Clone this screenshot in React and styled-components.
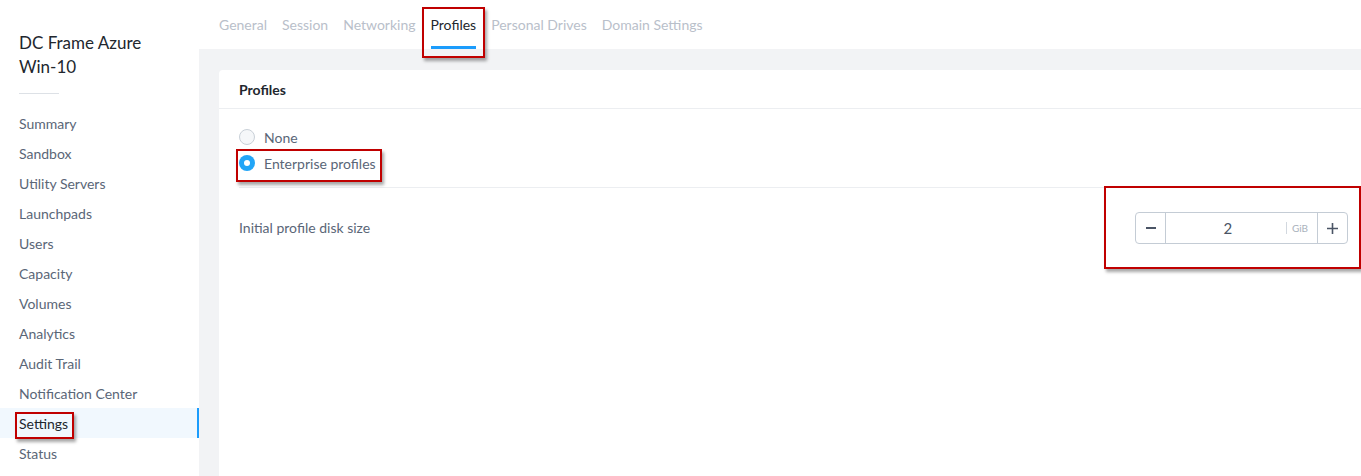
import React from "react";
import styled, { createGlobalStyle, css } from "styled-components";

const Global = createGlobalStyle`
  html, body { margin: 0; padding: 0; background: #fff; }
  body { font-family: Lato, "Open Sans", Arial, sans-serif; -webkit-font-smoothing: antialiased; }
  * { box-sizing: border-box; }
`;

const Page = styled.div`
  display: flex;
  width: 1361px;
  height: 476px;
  overflow: hidden;
`;

const Sidebar = styled.aside`
  width: 199px;
  flex: 0 0 199px;
  background: #fff;
  padding-top: 31px;
  display: flex;
  flex-direction: column;
`;

const Title = styled.h1`
  margin: 0 0 14px 19px;
  font-size: 17px;
  line-height: 24px;
  font-weight: 400;
  color: #22272e;
`;

const Rule = styled.div`
  width: 40px;
  height: 1px;
  background: #dde1e6;
  margin: 0 0 14px 19px;
`;

const NavItem = styled.div`
  height: 30px;
  display: flex;
  align-items: center;
  padding-left: 19px;
  font-size: 14px;
  color: #5a6677;
  ${(p) =>
    p.$active &&
    css`
      background: #f1f8fe;
      color: #22272e;
      box-shadow: inset -2px 0 0 #1b9cfc;
    `}
`;

const Mark = styled.span`
  position: relative;
  display: inline-flex;
  align-items: center;
  &::after {
    content: "";
    position: absolute;
    top: ${(p) => p.$t}px;
    right: ${(p) => p.$r}px;
    bottom: ${(p) => p.$b}px;
    left: ${(p) => p.$l}px;
    border: 2px solid #c00000;
    box-shadow: 2px 3px 3px rgba(0, 0, 0, 0.35);
    pointer-events: none;
    z-index: 5;
  }
`;

const Main = styled.main`
  flex: 1;
  display: flex;
  flex-direction: column;
  background: #f2f3f5;
  min-width: 0;
`;

const TabBar = styled.nav`
  height: 49px;
  background: #fff;
  display: flex;
  align-items: stretch;
  gap: 15px;
  padding-left: 20px;
`;

const Tab = styled.div`
  position: relative;
  display: flex;
  align-items: center;
  height: 100%;
  font-size: 14px;
  padding-bottom: 1px;
  color: ${(p) => (p.$active ? "#22272e" : "#b9c0ca")};
  ${(p) =>
    p.$active &&
    css`
      &::before {
        content: "";
        position: absolute;
        left: 0;
        right: 0;
        bottom: 0;
        height: 3px;
        background: #1b9cfc;
      }
    `}
`;

const Content = styled.div`
  flex: 1;
  padding: 21px 0 0 20px;
  display: flex;
`;

const Card = styled.section`
  flex: 1;
  background: #fff;
  border-radius: 4px 0 0 0;
  display: flex;
  flex-direction: column;
`;

const CardHeader = styled.header`
  height: 39px;
  display: flex;
  align-items: center;
  padding-left: 20px;
  font-size: 14px;
  font-weight: 700;
  color: #22272e;
  border-bottom: 1px solid #eceef1;
`;

const RadioList = styled.div`
  margin-left: 20px;
  padding: 15px 0 11px;
  display: flex;
  flex-direction: column;
  border-bottom: 1px solid #eceef1;
`;

const RadioRow = styled.label`
  display: flex;
  align-items: center;
  gap: 9px;
  height: 26px;
  font-size: 14px;
  color: #5a6677;
`;

const RadioDot = styled.span`
  width: 16px;
  height: 16px;
  border-radius: 50%;
  flex: 0 0 16px;
  ${(p) =>
    p.$checked
      ? css`
          background: #22a5f7;
          display: flex;
          align-items: center;
          justify-content: center;
          &::after {
            content: "";
            width: 6px;
            height: 6px;
            border-radius: 50%;
            background: #fff;
          }
        `
      : css`
          background: #f5f7f9;
          border: 1px solid #c9d0d8;
        `}
`;

const FieldRow = styled.div`
  display: flex;
  align-items: center;
  justify-content: space-between;
  padding: 24px 13px 0 20px;
`;

const FieldLabel = styled.span`
  font-size: 14px;
  color: #5a6677;
  margin-top: -2px;
`;

const Stepper = styled.div`
  width: 213px;
  height: 32px;
  border: 1px solid #c4ccd5;
  border-radius: 4px;
  display: flex;
  align-items: stretch;
  background: #fff;
`;

const StepBtn = styled.button`
  width: 30px;
  flex: 0 0 30px;
  border: none;
  background: transparent;
  padding: 0;
  display: flex;
  align-items: center;
  justify-content: center;
  color: #4a5465;
  ${(p) => (p.$side === "left" ? "border-right: 1px solid #c4ccd5;" : "border-left: 1px solid #c4ccd5;")}
`;

const ValueBox = styled.div`
  flex: 1;
  display: flex;
  align-items: center;
`;

const Value = styled.span`
  flex: 1;
  text-align: center;
  font-size: 15px;
  color: #4a5465;
  padding-left: 4px;
`;

const Unit = styled.span`
  font-size: 10px;
  color: #a9b1bc;
  padding: 0 9px 0 5px;
  border-left: 1px solid #d2d8df;
  line-height: 12px;
`;

const navItems = [
  "Summary",
  "Sandbox",
  "Utility Servers",
  "Launchpads",
  "Users",
  "Capacity",
  "Volumes",
  "Analytics",
  "Audit Trail",
  "Notification Center",
  "Settings",
  "Status",
];

const tabs = ["General", "Session", "Networking", "Profiles", "Personal Drives", "Domain Settings"];

export default function App() {
  return (
    <>
      <Global />
      <Page>
        <Sidebar>
          <Title>
            DC Frame Azure
            <br />
            Win-10
          </Title>
          <Rule />
          {navItems.map((n) => (
            <NavItem key={n} $active={n === "Settings"}>
              {n === "Settings" ? (
                <Mark $t={-3} $r={-6} $b={-7} $l={-4}>
                  {n}
                </Mark>
              ) : (
                n
              )}
            </NavItem>
          ))}
        </Sidebar>
        <Main>
          <TabBar>
            {tabs.map((t) =>
              t === "Profiles" ? (
                <Mark key={t} $t={7} $r={-9} $b={-9} $l={-9}>
                  <Tab $active>{t}</Tab>
                </Mark>
              ) : (
                <Tab key={t}>{t}</Tab>
              )
            )}
          </TabBar>
          <Content>
            <Card>
              <CardHeader>Profiles</CardHeader>
              <RadioList>
                <RadioRow>
                  <RadioDot />
                  None
                </RadioRow>
                <RadioRow>
                  <Mark $t={-1} $r={-6} $b={-6} $l={-3}>
                    <RadioRow as="span">
                      <RadioDot $checked />
                      Enterprise profiles
                    </RadioRow>
                  </Mark>
                </RadioRow>
              </RadioList>
              <FieldRow>
                <FieldLabel>Initial profile disk size</FieldLabel>
                <Mark $t={-26} $r={-13} $b={-25} $l={-31}>
                  <Stepper>
                    <StepBtn $side="left" aria-label="decrease">
                      <svg width="10" height="10" viewBox="0 0 10 10">
                        <path d="M0 5h10" stroke="currentColor" strokeWidth="2" />
                      </svg>
                    </StepBtn>
                    <ValueBox>
                      <Value>2</Value>
                      <Unit>GiB</Unit>
                    </ValueBox>
                    <StepBtn $side="right" aria-label="increase">
                      <svg width="11" height="11" viewBox="0 0 11 11">
                        <path d="M0 5.5h11M5.5 0v11" stroke="currentColor" strokeWidth="1.6" />
                      </svg>
                    </StepBtn>
                  </Stepper>
                </Mark>
              </FieldRow>
            </Card>
          </Content>
        </Main>
      </Page>
    </>
  );
}
